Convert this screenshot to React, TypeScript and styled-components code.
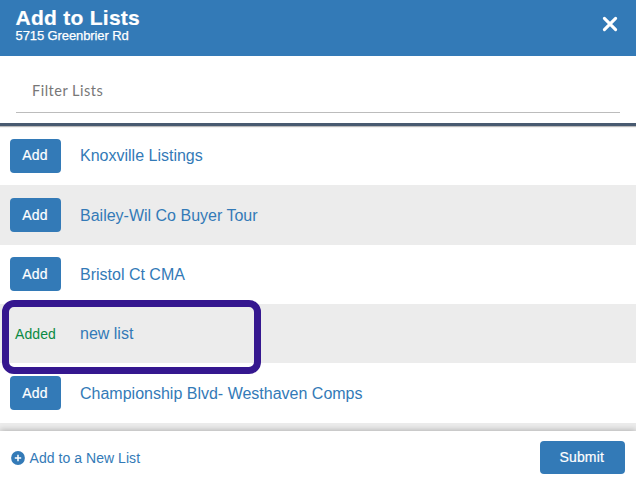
import React from "react";
import styled, { createGlobalStyle } from "styled-components";

const BLUE = "#337ab7";

const GlobalStyle = createGlobalStyle`
  *, *::before, *::after { box-sizing: border-box; }
  body { margin: 0; background: #fff; font-family: "Liberation Sans", Arial, sans-serif; overflow: hidden; }
`;

const Modal = styled.div`
  width: 636px;
  height: 483px;
  display: flex;
  flex-direction: column;
  background: #fff;
  overflow: hidden;
`;

const Header = styled.header`
  flex: none;
  height: 56px;
  display: flex;
  justify-content: space-between;
  padding: 7px 18px 0 15.5px;
  background: ${BLUE};
  color: #fff;
`;

const Title = styled.h1`
  margin: 0;
  font-size: 21px;
  line-height: 22px;
  font-weight: 700;
  letter-spacing: 0.27px;
  -webkit-text-stroke: 0.2px #fff;
`;

const Subtitle = styled.div`
  font-size: 13px;
  line-height: 14px;
  letter-spacing: -0.1px;
  -webkit-text-stroke: 0.25px #fff;
`;

const CloseButton = styled.button`
  width: 16px;
  height: 16px;
  margin-top: 9px;
  padding: 0;
  border: 0;
  background: none;
  svg { display: block; }
`;

const FilterArea = styled.div`
  flex: none;
  height: 70px;
  padding: 14px 16px 0;
  border-bottom: 3px solid #485a70;
  box-shadow: 0 1px 1px #bbb;
  position: relative;
`;

const FilterInput = styled.input`
  display: block;
  width: 100%;
  height: 43px;
  padding: 0 16px 2px;
  border: 0;
  border-bottom: 1px solid #bcbcbc;
  outline: 0;
  background: transparent;
  font-family: Lato, sans-serif;
  font-size: 14.5px;
  letter-spacing: 0.5px;
  &::placeholder { color: #777; opacity: 1; }
`;

const Lists = styled.ul`
  flex: none;
  height: 305px;
  margin: 0;
  padding: 0;
  list-style: none;
  overflow: hidden;
`;

const Row = styled.li`
  height: 59.35px;
  display: flex;
  align-items: center;
  padding-left: 10px;
  &:nth-child(even) { background: #ececec; }
`;

const Action = styled.div`
  width: 70px;
`;

const Button = styled.button<{ $wide?: boolean }>`
  display: block;
  width: ${(p) => (p.$wide ? 85.5 : 51)}px;
  height: ${(p) => (p.$wide ? 33 : 34)}px;
  padding: 0 1px 1px 0;
  border: 0;
  border-radius: 4px;
  background: ${BLUE};
  color: #fff;
  font-family: inherit;
  font-size: 14px;
  letter-spacing: 0.15px;
  -webkit-text-stroke: 0.2px #fff;
`;

const Added = styled.span`
  padding-left: 5px;
  color: #098a43;
  font-size: 14px;
  letter-spacing: 0.1px;
`;

const ListLink = styled.a`
  padding-top: 1.3px;
  color: ${BLUE};
  font-size: 16px;
  line-height: 20px;
  white-space: nowrap;
`;

const Highlight = styled.div`
  position: absolute;
  left: 2px;
  top: 300px;
  width: 259px;
  height: 74px;
  border: 7px solid #35178f;
  border-radius: 12px;
  pointer-events: none;
`;

const Footer = styled.footer`
  flex: 1;
  display: flex;
  align-items: center;
  justify-content: space-between;
  padding: 1px 11px 0 11px;
  background: #fff;
  box-shadow: 0 -1px 6px rgba(0, 0, 0, 0.25);
  position: relative;
  clip-path: inset(-9px 0 0 0);
`;

const NewList = styled.a`
  display: flex;
  align-items: center;
  gap: 4.5px;
  color: ${BLUE};
  font-size: 14px;
  letter-spacing: 0.05px;
  white-space: nowrap;
`;

const lists = [
  { name: "Knoxville Listings", added: false },
  { name: "Bailey-Wil Co Buyer Tour", added: false },
  { name: "Bristol Ct CMA", added: false },
  { name: "new list", added: true },
  { name: "Championship Blvd- Westhaven Comps", added: false },
];

export default function App() {
  return (
    <Modal>
      <GlobalStyle />
      <Header>
        <div>
          <Title>Add to Lists</Title>
          <Subtitle>5715 Greenbrier Rd</Subtitle>
        </div>
        <CloseButton aria-label="Close">
          <svg width="16" height="16" viewBox="0 0 16 16">
            <path d="M2.4 2.4 13.6 13.6M13.6 2.4 2.4 13.6" stroke="#fff" strokeWidth="3.1" strokeLinecap="round" />
          </svg>
        </CloseButton>
      </Header>
      <FilterArea>
        <FilterInput placeholder="Filter Lists" />
      </FilterArea>
      <Lists>
        {lists.map((list) => (
          <Row key={list.name}>
            <Action>{list.added ? <Added>Added</Added> : <Button>Add</Button>}</Action>
            <ListLink>{list.name}</ListLink>
          </Row>
        ))}
        <Row />
      </Lists>
      <Footer>
        <NewList>
          <svg width="14" height="14" viewBox="0 0 14 14">
            <circle cx="7" cy="7" r="6.9" fill={BLUE} />
            <path d="M7 3.8v6.4M3.8 7h6.4" stroke="#fff" strokeWidth="1.5" />
          </svg>
          Add to a New List
        </NewList>
        <Button $wide>Submit</Button>
      </Footer>
      <Highlight />
    </Modal>
  );
}
